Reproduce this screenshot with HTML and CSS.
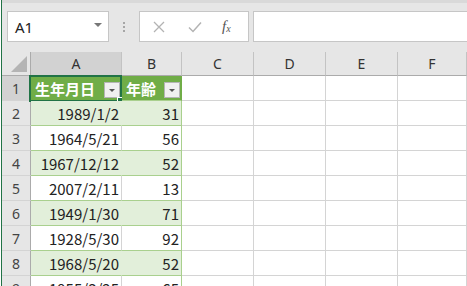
FILE: index.html
```html
<!DOCTYPE html>
<html lang="ja">
<head>
<meta charset="utf-8">
<link rel="stylesheet" href="styles.css">
</head>
<body>
<div class="app">
  <div class="toolbar">
    <div class="namebox"><span class="ref">A1</span><span class="caret"></span></div>
    <div class="grip"><i></i><i></i><i></i></div>
    <div class="fbuttons">
      <svg class="ico" width="14" height="14" viewBox="0 0 14 14"><path d="M2 2L12 12M12 2L2 12" stroke="#b3b3b3" stroke-width="1.3" fill="none"/></svg>
      <svg class="ico" width="16" height="14" viewBox="0 0 16 14"><path d="M2 7.5L6 11.5L14 2.5" stroke="#b3b3b3" stroke-width="1.5" fill="none"/></svg>
      <span class="fx">f<sub>x</sub></span>
    </div>
    <div class="finput"></div>
  </div>
  <div class="sheet">
    <div class="row head">
      <div class="rh corner"><span class="tri"></span></div>
      <div class="ch a sel">A</div><div class="ch b">B</div><div class="ch c">C</div><div class="ch d">D</div><div class="ch e">E</div><div class="ch f">F</div>
    </div>
    <div class="row r1">
      <div class="rh sel">1</div>
      <div class="cell a th">生年月日<span class="flt"></span><span class="selbox"><span class="handle"></span></span></div>
      <div class="cell b th">年齢<span class="flt"></span></div>
      <div class="cell c"></div><div class="cell d"></div><div class="cell e"></div><div class="cell f"></div>
    </div>
    <div class="row band">
      <div class="rh">2</div><div class="cell a n">1989/1/2</div><div class="cell b n">31</div>
      <div class="cell c"></div><div class="cell d"></div><div class="cell e"></div><div class="cell f"></div>
    </div>
    <div class="row plain">
      <div class="rh">3</div><div class="cell a n">1964/5/21</div><div class="cell b n">56</div>
      <div class="cell c"></div><div class="cell d"></div><div class="cell e"></div><div class="cell f"></div>
    </div>
    <div class="row band">
      <div class="rh">4</div><div class="cell a n">1967/12/12</div><div class="cell b n">52</div>
      <div class="cell c"></div><div class="cell d"></div><div class="cell e"></div><div class="cell f"></div>
    </div>
    <div class="row plain">
      <div class="rh">5</div><div class="cell a n">2007/2/11</div><div class="cell b n">13</div>
      <div class="cell c"></div><div class="cell d"></div><div class="cell e"></div><div class="cell f"></div>
    </div>
    <div class="row band">
      <div class="rh">6</div><div class="cell a n">1949/1/30</div><div class="cell b n">71</div>
      <div class="cell c"></div><div class="cell d"></div><div class="cell e"></div><div class="cell f"></div>
    </div>
    <div class="row plain">
      <div class="rh">7</div><div class="cell a n">1928/5/30</div><div class="cell b n">92</div>
      <div class="cell c"></div><div class="cell d"></div><div class="cell e"></div><div class="cell f"></div>
    </div>
    <div class="row band">
      <div class="rh">8</div><div class="cell a n">1968/5/20</div><div class="cell b n">52</div>
      <div class="cell c"></div><div class="cell d"></div><div class="cell e"></div><div class="cell f"></div>
    </div>
    <div class="row plain">
      <div class="rh">9</div><div class="cell a n">1955/3/25</div><div class="cell b n">65</div>
      <div class="cell c"></div><div class="cell d"></div><div class="cell e"></div><div class="cell f"></div>
    </div>
  </div>
</div>
</body>
</html>
```

FILE: styles.css
```css
* { box-sizing: border-box; }
html, body { margin: 0; padding: 0; }
body {
  width: 467px; height: 286px; overflow: hidden; background: #fff;
  font-family: "Noto Sans CJK JP", "Noto Sans", sans-serif;
}
.app {
  margin-left: 1px;
  border-left: 1px solid #217346;
  height: 286px;
  overflow: hidden;
}
.toolbar {
  height: 52px;
  background: #e6e6e6;
  border-top: 3px solid #d9d9d9;
  display: flex;
  align-items: flex-start;
  padding-top: 8px;
  padding-left: 5px;
}
.namebox {
  width: 102px; height: 31px;
  background: #fff; border: 1px solid #c6c6c6;
  display: flex; align-items: center; justify-content: space-between;
  padding: 0 6px 0 7px;
}
.ref { font-size: 15px; color: #222; font-family: "Noto Sans", sans-serif; }
.caret {
  width: 0; height: 0;
  border-left: 4px solid transparent; border-right: 4px solid transparent;
  border-top: 4px solid #777;
  margin-bottom: 4px;
}
.grip {
  width: 30px; height: 31px;
  display: flex; flex-direction: column; align-items: center; justify-content: center; gap: 2px;
}
.grip i { width: 2px; height: 2px; background: #a6a6a6; display: block; }
.fbuttons {
  width: 110px; height: 31px;
  background: #fff; border: 1px solid #c6c6c6;
  display: flex; align-items: center;
  padding-left: 12px; gap: 21px;
}
.fx {
  font-family: "Liberation Serif", serif; font-style: italic; font-size: 15px; color: #555;
  margin-left: -2px;
}
.fx sub { font-size: 10px; vertical-align: 0; position: relative; top: 1px; }
.finput {
  flex: 1; height: 31px; margin-left: 4px;
  background: #fff; border: 1px solid #c6c6c6; border-right: none;
}
.sheet { }
.row { display: flex; height: 25px; }
.row.head { height: 24px; }
.rh {
  width: 29px; flex: none;
  background: #e6e6e6;
  border-right: 1px solid #ababab;
  border-bottom: 1px solid #d4d4d4;
  display: flex; align-items: center; justify-content: center;
  font-size: 14px; color: #444;
  font-family: "Noto Sans", sans-serif;
}
.rh.sel { background: #d2d2d2; }
.corner { border-bottom: 1px solid #ababab; position: relative; }
.tri {
  position: absolute; right: 3px; bottom: 3px;
  width: 0; height: 0;
  border-left: 16px solid transparent;
  border-bottom: 16px solid #b4b4b4;
}
.ch {
  flex: none;
  background: #e6e6e6;
  border-right: 1px solid #c3c3c3;
  border-bottom: 1px solid #ababab;
  display: flex; align-items: center; justify-content: center;
  font-size: 14px; color: #333;
  font-family: "Noto Sans", sans-serif;
}
.ch.sel { background: #d2d2d2; }
.a { width: 91px; flex: none; }
.b { width: 60px; flex: none; }
.c, .d, .e { width: 72px; flex: none; }
.f { flex: 1; }
.cell {
  border-right: 1px solid #d4d4d4;
  border-bottom: 1px solid #d4d4d4;
  position: relative;
}
.cell.n {
  display: flex; align-items: center; justify-content: flex-end;
  padding-right: 2px;
  font-size: 15px; color: #222;
}
.th {
  background: #70ad47; color: #fff; font-weight: bold;
  font-size: 15px;
  display: flex; align-items: center;
  padding-left: 4px;
  border-right-color: #70ad47;
  border-bottom-color: #a9d08e;
}
.flt {
  position: absolute; right: 1px; top: 6px;
  width: 16px; height: 16px;
  background: #f0f0f0; border: 1px solid #b5b5b5;
}
.flt::after {
  content: ""; position: absolute; left: 4px; top: 6px;
  border-left: 3px solid transparent; border-right: 3px solid transparent;
  border-top: 3px solid #555;
}
.selbox {
  position: absolute; left: -2px; top: -1px; right: -1px; bottom: -2px;
  border: 2px solid #217346;
  pointer-events: none;
}
.handle {
  position: absolute; right: -4px; bottom: -4px;
  width: 7px; height: 7px; background: #217346;
  border: 1px solid #fff;
}
.band .a, .band .b { background: #e2efda; }
.band .a, .band .b, .plain .a, .plain .b { border-bottom-color: #a9d08e; }
.band .a { border-right-color: #e2efda; }
.band .b, .plain .b { border-right-color: #a9d08e; }
.r1 .b.th { border-right-color: #70ad47; }
```
